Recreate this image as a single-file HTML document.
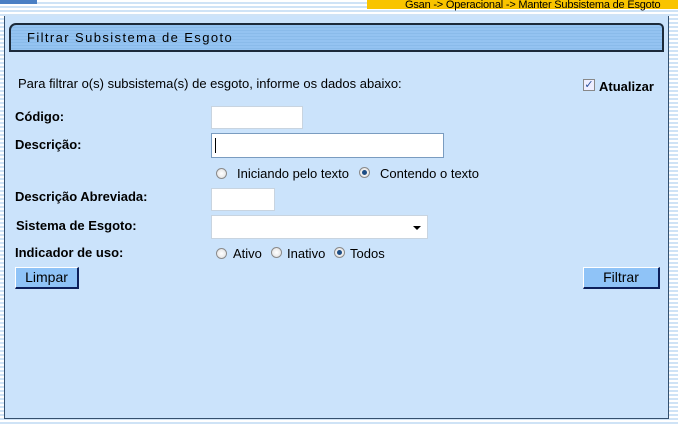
<!DOCTYPE html>
<html><head><meta charset="utf-8"><style>
*{margin:0;padding:0;box-sizing:border-box}
body{width:678px;height:425px;overflow:hidden;position:relative;font-family:"Liberation Sans",Arial,sans-serif;font-size:13px;color:#000;
background:repeating-linear-gradient(to bottom,#ffffff 0,#ffffff 2px,#cfe3f6 2px,#cfe3f6 4px);}
.a{position:absolute;white-space:nowrap}
.panel{position:absolute;left:4px;top:16px;width:665px;height:403px;background:#cbe3fb;border:1px solid #34506e;border-top:none}
.hdr{position:absolute;left:9px;top:23px;width:655px;height:29px;border:2px solid #1c2a3a;border-radius:7px 5px 0 0;
background:repeating-linear-gradient(to bottom,#94c3f1 0,#94c3f1 2px,#8abbea 2px,#8abbea 3px);}
.hdr span{position:absolute;left:16px;top:5px;letter-spacing:1.4px;font-size:13px}
b{font-weight:bold}
.in{position:absolute;background:#fff;border:1px solid #c8d4e0}
.rad{position:absolute;width:11px;height:11px;border-radius:50%;border:1px solid #8a8a8a;background:radial-gradient(circle,#fff,#ddd)}
.rad.on::after{content:"";position:absolute;left:2px;top:2px;width:5px;height:5px;border-radius:50%;background:#1d4d84}
.btn{position:absolute;height:22px;background:#8fc3f7;border:1px solid;border-color:#fff #0c1f5a #0c1f5a #fff;border-width:1px 2px 2px 1px;text-align:center;line-height:19px;font-size:14px}
</style></head><body>
<div class="a" style="left:0;top:0;width:37px;height:4px;background:#4a7fc4"></div>
<div class="a" style="left:367px;top:0;width:311px;height:9px;background:#f9c400"></div>
<div class="a" style="left:405px;top:-1px;font-size:11px;letter-spacing:-0.2px">Gsan -&gt; Operacional -&gt; Manter Subsistema de Esgoto</div>
<div class="panel"></div>
<div class="hdr"><span>Filtrar Subsistema de Esgoto</span></div>
<div class="a" style="left:18px;top:76px">Para filtrar o(s) subsistema(s) de esgoto, informe os dados abaixo:</div>
<div class="a" style="left:583px;top:79px;width:12px;height:12px;border:1px solid #888;background:#eef;color:#2a4f9a;font-size:11px;line-height:10px;text-align:center">✓</div>
<div class="a" style="left:599px;top:79px;font-weight:bold;font-size:13px">Atualizar</div>
<div class="a" style="left:15px;top:109px"><b>Código:</b></div>
<div class="in" style="left:211px;top:106px;width:92px;height:23px"></div>
<div class="a" style="left:15px;top:137px"><b>Descrição:</b></div>
<div class="in" style="left:211px;top:133px;width:233px;height:25px;border-color:#7a9cc0"><div style="position:absolute;left:3px;top:4px;width:1px;height:15px;background:#000"></div></div>
<div class="rad" style="left:216px;top:168px"></div>
<div class="a" style="left:237px;top:166px">Iniciando pelo texto</div>
<div class="rad on" style="left:359px;top:167px"></div>
<div class="a" style="left:380px;top:166px">Contendo o texto</div>
<div class="a" style="left:15px;top:189px"><b>Descrição Abreviada:</b></div>
<div class="in" style="left:211px;top:188px;width:64px;height:23px"></div>
<div class="a" style="left:16px;top:218px"><b>Sistema de Esgoto:</b></div>
<div class="in" style="left:211px;top:215px;width:217px;height:24px"><div style="position:absolute;right:6px;top:10px;border:4px solid transparent;border-top:4px solid #000;border-bottom:none"></div></div>
<div class="a" style="left:15px;top:245px"><b>Indicador de uso:</b></div>
<div class="rad" style="left:216px;top:248px"></div>
<div class="a" style="left:233px;top:246px">Ativo</div>
<div class="rad" style="left:271px;top:247px"></div>
<div class="a" style="left:287px;top:246px">Inativo</div>
<div class="rad on" style="left:334px;top:247px"></div>
<div class="a" style="left:350px;top:246px">Todos</div>
<div class="btn" style="left:15px;top:267px;width:64px">Limpar</div>
<div class="btn" style="left:583px;top:267px;width:77px">Filtrar</div>
</body></html>
